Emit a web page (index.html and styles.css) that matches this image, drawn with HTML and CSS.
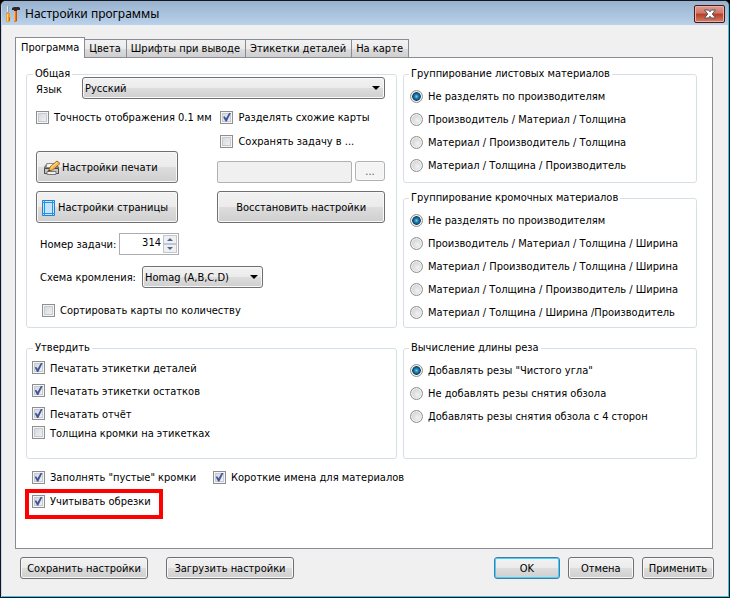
FILE: index.html
```html
<!DOCTYPE html>
<html lang="ru">
<head>
<meta charset="utf-8">
<title>Настройки программы</title>
<link rel="stylesheet" href="styles.css">
</head>
<body>
<div class="window">
  <header class="titlebar">
    <svg class="app-icon" viewBox="0 0 16 18" width="16" height="18" aria-hidden="true">
      <path d="M2 1h2v5l-.5 3h-1L2 6z" fill="#8fa3b0"/>
      <path d="M2.500 1v6" stroke="#dfeaf0"/>
      <path d="M1 8h4v2l-.5 1 .5 1v4l-1 1H2l-1-1v-4l.5-1L1 10z" fill="#f39a1f"/>
      <path d="M2.500 9v7" stroke="#ffd27a"/>
      <path d="M4.500 12v4" stroke="#c4660a"/>
      <path d="M7 3l2-1h5l1 1v2h-3v1H9V5H7z" fill="#30262a"/>
      <path d="M9 6h3v10l-1 1H9z" fill="#f0761c"/>
      <path d="M9.500 6v10" stroke="#ffb05a"/>
      <path d="M11.500 6v10" stroke="#c4500a"/>
    </svg>
    <h1 class="title">Настройки программы</h1>
    <button class="close" type="button" aria-label="Закрыть">
      <svg viewBox="0 0 12 10" width="12" height="10" aria-hidden="true">
        <path d="M.5 1h4L6 2.800 7.500 1h4L8.300 5l3.200 4h-4L6 7.200 4.500 9h-4l3.200-4z" fill="#fff" stroke="#53555f" stroke-width="1"/>
      </svg>
    </button>
  </header>

  <main class="client">
    <nav class="tabs" role="tablist">
      <button class="tab active" type="button" role="tab" aria-selected="true">Программа</button>
      <button class="tab" type="button" role="tab">Цвета</button>
      <button class="tab" type="button" role="tab">Шрифты при выводе</button>
      <button class="tab" type="button" role="tab">Этикетки деталей</button>
      <button class="tab" type="button" role="tab">На карте</button>
    </nav>

    <section class="panel">
      <div class="groups">
        <fieldset class="group general">
          <legend>Общая</legend>
          <div class="row language">
            <label for="lang">Язык</label>
            <span class="select"><select id="lang"><option>Русский</option></select></span>
          </div>
          <div class="split">
            <div class="stack">
              <label class="check"><input type="checkbox">Точность отображения 0.1 мм</label>
              <button class="btn tall icon-btn print" type="button">
                <svg viewBox="0 0 18 16" width="18" height="16" aria-hidden="true">
                  <path d="M1 7l3-4h8l4 4v7H1z" fill="#777"/>
                  <path d="M4 3.500h8l2 4H3z" fill="#f3f3f3" stroke="#8a8a8a"/>
                  <path d="M1.500 8.500h14v5h-14z" fill="#c4c4c4" stroke="#4c4c4c"/>
                  <path d="M4 11.500h9v3H4z" fill="#eee" stroke="#777"/>
                  <path d="M6 10l1-3 7-6 3 2.500L9.500 10 5.500 11z" fill="#f6bd4e" stroke="#a66a1c"/>
                  <path d="M8 7.500l6-5" stroke="#ffe3a0"/>
                  <path d="M5 11.500l1-2 1.500 1.500z" fill="#4c3520"/>
                </svg>Настройки печати</button>
              <button class="btn tall icon-btn" type="button">
                <svg viewBox="0 0 16 18" width="16" height="18" aria-hidden="true">
                  <rect x="1" y="1" width="13" height="16" fill="#c9e3fb"/>
                  <path d="M1.500 1.500h12v15h-12z" fill="none" stroke="#2d7cc0"/>
                  <path d="M3.500 1v16M11.500 1v16M1 3.500h13M1 14.500h13" stroke="#1696f5"/>
                </svg>Настройки страницы</button>
            </div>
            <div class="stack">
              <label class="check inset"><input type="checkbox" checked>Разделять схожие карты</label>
              <label class="check inset"><input type="checkbox">Сохранять задачу в ...</label>
              <div class="row path">
                <input class="path-field" type="text" disabled aria-label="Папка задачи">
                <button class="btn browse" type="button" disabled>...</button>
              </div>
              <button class="btn tall" type="button">Восстановить настройки</button>
            </div>
          </div>
          <div class="row number">
            <label for="num">Номер задачи:</label>
            <span class="spinner">
              <input id="num" type="text" value="314">
              <span class="arrows">
                <button class="up" type="button" aria-label="Больше"></button>
                <button class="down" type="button" aria-label="Меньше"></button>
              </span>
            </span>
          </div>
          <div class="row scheme">
            <label for="scheme">Схема кромления:</label>
            <span class="select"><select id="scheme"><option>Homag (A,B,C,D)</option></select></span>
          </div>
          <label class="check sort"><input type="checkbox">Сортировать карты по количеству</label>
        </fieldset>

        <div class="column">
          <fieldset class="group radios">
            <legend>Группирование листовых материалов</legend>
            <label class="radio"><input type="radio" name="sheet" checked>Не разделять по производителям</label>
            <label class="radio"><input type="radio" name="sheet">Производитель / Материал / Толщина</label>
            <label class="radio"><input type="radio" name="sheet">Материал / Производитель / Толщина</label>
            <label class="radio"><input type="radio" name="sheet">Материал / Толщина / Производитель</label>
          </fieldset>
          <fieldset class="group radios">
            <legend>Группирование кромочных материалов</legend>
            <label class="radio"><input type="radio" name="edge" checked>Не разделять по производителям</label>
            <label class="radio"><input type="radio" name="edge">Производитель / Материал / Толщина / Ширина</label>
            <label class="radio"><input type="radio" name="edge">Материал / Производитель / Толщина / Ширина</label>
            <label class="radio"><input type="radio" name="edge">Материал / Толщина / Производитель / Ширина</label>
            <label class="radio"><input type="radio" name="edge">Материал / Толщина / Ширина /Производитель</label>
          </fieldset>
        </div>

        <fieldset class="group approve">
          <legend>Утвердить</legend>
          <label class="check"><input type="checkbox" checked>Печатать этикетки деталей</label>
          <label class="check"><input type="checkbox" checked>Печатать этикетки остатков</label>
          <label class="check"><input type="checkbox" checked>Печатать отчёт</label>
          <label class="check tight"><input type="checkbox">Толщина кромки на этикетках</label>
        </fieldset>

        <fieldset class="group radios">
          <legend>Вычисление длины реза</legend>
          <label class="radio"><input type="radio" name="cut" checked>Добавлять резы "Чистого угла"</label>
          <label class="radio"><input type="radio" name="cut">Не добавлять резы снятия обзола</label>
          <label class="radio"><input type="radio" name="cut">Добавлять резы снятия обзола с 4 сторон</label>
        </fieldset>
      </div>

      <div class="extras">
        <label class="check"><input type="checkbox" checked>Заполнять "пустые" кромки</label>
        <label class="check"><input type="checkbox" checked>Короткие имена для материалов</label>
      </div>
      <div class="highlight">
        <label class="check"><input type="checkbox" checked>Учитывать обрезки</label>
      </div>
    </section>

    <footer class="actions">
      <button class="btn wide" type="button">Сохранить настройки</button>
      <button class="btn wide" type="button">Загрузить настройки</button>
      <span class="confirm">
        <button class="btn default" type="button">OK</button>
        <button class="btn" type="button">Отмена</button>
        <button class="btn" type="button">Применить</button>
      </span>
    </footer>
  </main>
</div>
</body>
</html>
```

FILE: styles.css
```css
* {
  box-sizing: border-box;
}

body {
  margin: 0;
  background: #000;
  color: #000;
  font: 11px/14px "DejaVu Sans Condensed", "Noto Sans", sans-serif;
}

button,
input,
select {
  font: inherit;
  color: inherit;
  margin: 0;
}

.window {
  min-height: 100vh;
  display: flex;
  flex-direction: column;
  border: 1px solid #15161a;
  border-radius: 6px 6px 0 0;
  background: #f0f0f0;
  box-shadow: inset 1px 1px #c3d5ea, inset -1px -1px #2cc9ec;
  overflow: hidden;
}

.titlebar {
  display: flex;
  align-items: center;
  height: 24px;
  margin: 0 1px;
  padding: 2px 3px 0;
  background: linear-gradient(#98b2cf, #b9d1ea);
}

.title {
  flex: 1;
  margin: 0 0 0 4px;
  font: 12px/16px "Noto Sans", sans-serif;
}

.close {
  display: flex;
  align-items: center;
  justify-content: center;
  width: 31px;
  height: 18px;
  padding: 0;
  border: 1px solid #4a1715;
  border-radius: 2px;
  background: linear-gradient(#dc9d90 0, #cf7665 45%, #b83a24 50%, #d47e66 100%);
  box-shadow: inset 0 0 0 1px #e6b3a8;
}

.close svg {
  flex: none;
}

.client {
  flex: 1;
  display: flex;
  flex-direction: column;
  padding: 12px 15px 18px 14px;
}

.tabs {
  display: flex;
  align-items: flex-end;
}

.tab {
  height: 18px;
  padding: 1px 5px 0 4px;
  border: 1px solid #898c95;
  border-bottom: 0;
  background: linear-gradient(#f2f2f2 0, #ebebeb 50%, #dddddd 50%, #cfcfcf 100%);
  white-space: nowrap;
}

.tab + .tab {
  border-left: 0;
}

.tab.active {
  height: 21px;
  padding: 0 5px 1px;
  margin-bottom: -1px;
  background: #fff;
  position: relative;
}

.panel {
  flex: 1;
  margin-right: 1px;
  padding: 8px 15px 0 10px;
  border: 1px solid #898c95;
  background: #fff;
}

.groups {
  display: grid;
  grid-template-columns: 371fr 294fr;
  gap: 12px 6px;
}

.column {
  display: flex;
  flex-direction: column;
  gap: 7px;
}

.group {
  min-width: 0;
  margin: 0;
  padding: 0 8px 4px 9px;
  border: 1px solid #d5dfe5;
  border-radius: 3px;
}

.group legend {
  margin-left: -3px;
  padding: 0 2px;
  line-height: 16px;
}

.radios {
  padding: 2px 5px 6px 6px;
}

.radios legend {
  margin-left: -1px;
}

.column .radios:last-child {
  flex: 1;
  padding-bottom: 4px;
}

.approve {
  min-height: 119px;
  padding: 0 5px 5px;
}

.approve legend {
  margin-left: 1px;
}

.row {
  display: flex;
  align-items: center;
}

.check,
.radio {
  display: flex;
  align-items: center;
  height: 20px;
  padding-top: 2px;
  white-space: nowrap;
}

.radio,
.approve .check {
  height: 23px;
}

.approve .tight {
  height: 15px;
}

.check input,
.radio input {
  flex: none;
  appearance: none;
  width: 13px;
  height: 13px;
  border: 1px solid #8e8f8f;
}

.check input {
  margin: 0 5px 2px 0;
  background: linear-gradient(135deg, #cfd2d8, #f6f6f6);
  box-shadow: inset 0 0 0 1px #f4f4f4, inset 0 0 0 2px #c6cad2;
}

.check input:checked::after {
  content: "";
  display: block;
  width: 9px;
  height: 9px;
  margin: 1px;
  background: #41579a;
  clip-path: polygon(8% 50%, 24% 42%, 40% 64%, 76% 0, 96% 0, 48% 100%, 34% 100%);
}

.radio input {
  margin-right: 5px;
  border-radius: 50%;
  background: radial-gradient(circle at 60% 60%, #f2f2f2, #c4c4c4);
  box-shadow: inset 0 0 0 1px #f4f4f4;
}

.radio input:checked {
  background: radial-gradient(circle at 50% 50%, #5fd0f5 0, #1c7fb4 2px, #123c5c 4px, #e4e4e4 5px);
}

.language {
  margin-top: -5px;
}

.language label {
  width: 46px;
  padding-top: 4px;
}

.language .select {
  flex: 1;
  margin-right: 3px;
}

.select {
  display: block;
  position: relative;
}

.select select {
  display: block;
  appearance: none;
  width: 100%;
  height: 22px;
  padding: 1px 20px 0 2px;
  border: 1px solid #707070;
  border-radius: 3px;
  background: linear-gradient(#f2f2f2 0, #ebebeb 50%, #dddddd 50%, #cfcfcf 100%);
  box-shadow: inset 0 0 0 1px #f8f8f8;
}

.select::after {
  content: "";
  position: absolute;
  right: 5px;
  top: 9px;
  border: 4px solid transparent;
  border-top-color: #000;
  border-bottom: 0;
  pointer-events: none;
}

.split {
  display: grid;
  grid-template-columns: 142fr 167fr;
  column-gap: 39px;
  margin: 8px 3px 0 0;
}

.stack {
  display: flex;
  flex-direction: column;
  min-width: 0;
}

.inset {
  margin-left: 3px;
}

.inset + .inset {
  margin-top: 4px;
}

.path {
  gap: 3px;
  margin-top: 10px;
  align-items: flex-start;
}

.path-field {
  flex: 1;
  min-width: 0;
  height: 22px;
  border: 1px solid #adb2b5;
  border-radius: 2px;
  background: #f0f0f0;
}

.btn {
  display: flex;
  align-items: center;
  justify-content: center;
  height: 22px;
  padding: 1px 6px 0;
  border: 1px solid #707070;
  border-radius: 3px;
  background: linear-gradient(#f2f2f2 0, #ebebeb 50%, #dddddd 50%, #cfcfcf 100%);
  box-shadow: inset 0 0 0 1px #f8f8f8;
  white-space: nowrap;
}

.btn svg {
  flex: none;
}

.tall {
  height: 32px;
}

.icon-btn {
  justify-content: flex-start;
  gap: 1px;
  padding-left: 4px;
}

.print {
  margin-top: 24px;
  padding-left: 6px;
}

.tall + .tall,
.path + .tall {
  margin-top: 8px;
}

.browse {
  width: 30px;
  height: 20px;
  border-color: #adb2b5;
  background: #f4f4f4;
  color: #555;
}

.number,
.scheme {
  padding-left: 4px;
}

.number {
  margin-top: 10px;
}

.number label {
  width: 79px;
  padding-top: 2px;
}

.spinner {
  display: flex;
  width: 60px;
  height: 22px;
  padding: 1px;
  border: 1px solid #abadb3;
}

.spinner input {
  flex: 1;
  min-width: 0;
  padding: 0 2px 2px 0;
  border: 0;
  text-align: right;
}

.arrows {
  display: flex;
  flex-direction: column;
  width: 14px;
}

.arrows button {
  flex: 1;
  display: flex;
  align-items: center;
  justify-content: center;
  padding: 0;
  border: 1px solid #c3c6cc;
  background: #f0f0f0;
}

.arrows button::after {
  content: "";
  border: 3px solid transparent;
}

.arrows .up::after {
  border-top: 0;
  border-bottom-color: #4d63a8;
}

.arrows .down::after {
  border-bottom: 0;
  border-top-color: #4d63a8;
}

.scheme {
  margin-top: 11px;
}

.scheme label {
  width: 102px;
  padding-top: 2px;
}

.scheme .select {
  width: 121px;
}

.sort {
  margin-top: 12px;
  padding-left: 6px;
}

.extras {
  display: flex;
  margin-top: 8px;
  padding-left: 6px;
}

.extras .check {
  width: 181px;
}

.highlight {
  width: fit-content;
  margin: 2px 0 0 -1px;
  padding: 0 8px 6px 3px;
  border: 4px solid #fe0000;
}

.highlight .check {
  height: 16px;
}

.actions {
  display: flex;
  gap: 18px;
  margin-top: 8px;
  padding-left: 5px;
}

.wide {
  width: 128px;
}

.confirm {
  display: flex;
  gap: 8px;
  margin-left: auto;
}

.confirm .btn {
  min-width: 66px;
}

.confirm .default {
  border-color: #3c7fb1;
  box-shadow: inset 0 0 0 1px #46d0f5;
}
```
